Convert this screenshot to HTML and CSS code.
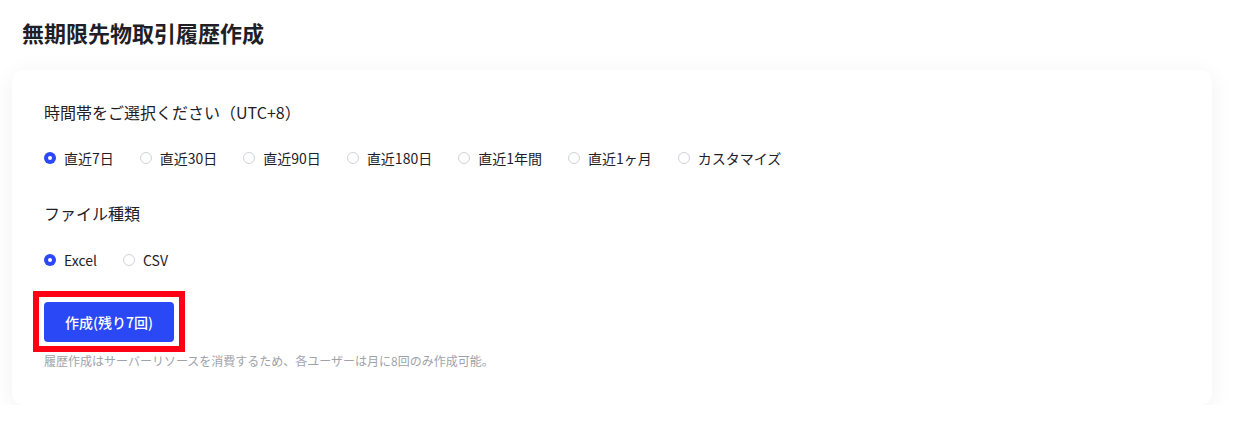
FILE: index.html
```html
<!DOCTYPE html>
<html lang="ja">
<head>
<meta charset="utf-8">
<title>無期限先物取引履歴作成</title>
<link rel="stylesheet" href="styles.css">
</head>
<body>
<div class="page">
  <h1 class="title">無期限先物取引履歴作成</h1>
  <div class="card">
    <div class="section-label">時間帯をご選択ください（UTC+8）</div>
    <div class="radio-row first-row">
      <label class="radio checked"><span class="dot"></span><span class="text">直近7日</span></label>
      <label class="radio"><span class="dot"></span><span class="text">直近30日</span></label>
      <label class="radio"><span class="dot"></span><span class="text">直近90日</span></label>
      <label class="radio"><span class="dot"></span><span class="text">直近180日</span></label>
      <label class="radio"><span class="dot"></span><span class="text">直近1年間</span></label>
      <label class="radio"><span class="dot"></span><span class="text">直近1ヶ月</span></label>
      <label class="radio"><span class="dot"></span><span class="text">カスタマイズ</span></label>
    </div>
    <div class="section-label second-label">ファイル種類</div>
    <div class="radio-row second-row">
      <label class="radio checked"><span class="dot"></span><span class="text">Excel</span></label>
      <label class="radio"><span class="dot"></span><span class="text">CSV</span></label>
    </div>
    <div class="btn-wrap">
      <button class="create-btn" type="button">作成(残り7回)</button>
    </div>
    <p class="note">履歴作成はサーバーリソースを消費するため、各ユーザーは月に8回のみ作成可能。</p>
  </div>
</div>
</body>
</html>
```

FILE: styles.css
```css
html, body {
  margin: 0;
  padding: 0;
  background: #ffffff;
}

body {
  font-family: "Noto Sans CJK JP", "Noto Sans", "Liberation Sans", sans-serif;
  color: #1e2026;
}

.page {
  padding: 17px 24px 0 12px;
}

.title {
  margin: 0;
  padding-left: 10px;
  font-size: 22px;
  line-height: 30px;
  font-weight: 700;
  color: #1e2026;
}

.card {
  margin-top: 23px;
  background: #ffffff;
  border-radius: 12px;
  box-shadow: 0 4px 24px rgba(0, 0, 0, 0.06);
  padding: 30px 32px 35px;
  width: 1136px;
}

.section-label {
  font-size: 16px;
  line-height: 24px;
  color: #1e2026;
}

.second-label {
  margin-top: 32px;
}

.radio-row {
  display: flex;
  align-items: center;
  gap: 26px;
  margin-top: 23px;
  height: 22px;
}

.second-row {
  margin-top: 24px;
}

.radio {
  display: flex;
  align-items: center;
  gap: 8px;
  font-size: 14px;
  line-height: 22px;
  color: #1e2026;
}

.dot {
  box-sizing: border-box;
  width: 12px;
  height: 12px;
  border-radius: 50%;
  border: 1px solid #cfd2d9;
  background: #ffffff;
  position: relative;
}

.radio.checked .dot {
  border: none;
  background: #2a48f5;
}

.radio.checked .dot::after {
  content: "";
  position: absolute;
  left: 4px;
  top: 4px;
  width: 4px;
  height: 4px;
  border-radius: 50%;
  background: #ffffff;
}

.btn-wrap {
  position: relative;
  width: 130px;
  margin-top: 31px;
}

.btn-wrap::after {
  content: "";
  position: absolute;
  left: -11px;
  right: -11px;
  top: -11px;
  bottom: -10px;
  border: 6px solid #ff0014;
  pointer-events: none;
}

.create-btn {
  display: block;
  width: 130px;
  height: 40px;
  border: none;
  border-radius: 4px;
  background: #2a48f5;
  color: #ffffff;
  font-family: "Noto Sans CJK JP", "Noto Sans", sans-serif;
  font-size: 14px;
  font-weight: 500;
  padding: 0;
}

.note {
  margin: 10px 0 0;
  font-size: 12px;
  line-height: 18px;
  color: #9ea3ab;
}
```
